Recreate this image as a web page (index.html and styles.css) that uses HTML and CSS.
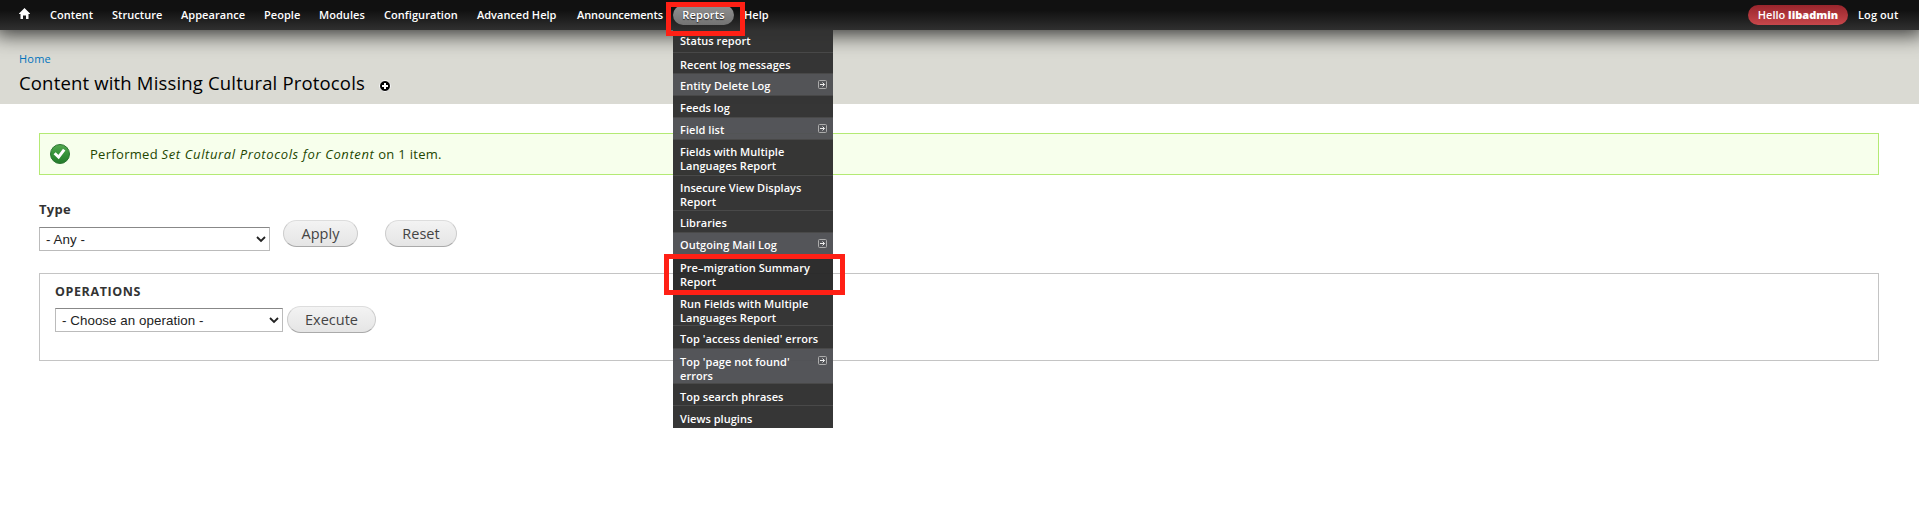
FILE: index.html
```html
<!DOCTYPE html>
<html lang="en">
<head>
<meta charset="utf-8">
<title>Content with Missing Cultural Protocols</title>
<link rel="stylesheet" href="styles.css">
</head>
<body>
<svg class="defs" width="0" height="0"><symbol id="more" viewBox="0 0 9 9"><rect x=".5" y=".5" width="8" height="8" rx="1" fill="none" stroke="#aaa"/><path d="M2 4.500h4.500M4.500 2.500l2 2-2 2" fill="none" stroke="#eee"/></symbol></svg>
<header class="admin-bar">
  <a class="home"><svg width="11" height="11" viewBox="0 0 11 11"><path d="M5.500 0 11 5.500V6H9.500v5H7V7.500H4V11H1.500V6H0V5.500z" fill="#fff"/></svg></a>
  <nav class="nav">
    <a class="w-content"><span>Content</span></a><a class="w-structure"><span>Structure</span></a><a class="w-appearance"><span>Appearance</span></a><a class="w-people"><span>People</span></a><a class="w-modules"><span>Modules</span></a><a class="w-config"><span>Configuration</span></a><a class="w-advanced"><span>Advanced Help</span></a><a class="w-announce"><span>Announcements</span></a>
    <div class="reports">
      <a class="pill"><span>Reports</span></a>
      <ul class="menu">
        <li class="h23 first"><span>Status report</span></li>
        <li class="h21"><span>Recent log messages</span></li>
        <li class="h22 sub"><span>Entity Delete Log</span><svg class="more"><use href="#more"/></svg></li>
        <li class="h22"><span>Feeds log</span></li>
        <li class="h22 sub"><span>Field list</span><svg class="more"><use href="#more"/></svg></li>
        <li class="h36"><span>Fields with Multiple<br>Languages Report</span></li>
        <li class="h35"><span>Insecure View Displays<br>Report</span></li>
        <li class="h22"><span>Libraries</span></li>
        <li class="h22 sub"><span>Outgoing Mail Log</span><svg class="more"><use href="#more"/></svg></li>
        <li class="h36 hover"><span>Pre–migration Summary<br>Report</span></li>
        <li class="h35"><span>Run Fields with Multiple<br>Languages Report</span></li>
        <li class="h23"><span>Top 'access denied' errors</span></li>
        <li class="h35 sub"><span>Top 'page not found'<br>errors</span><svg class="more"><use href="#more"/></svg></li>
        <li class="h22"><span>Top search phrases</span></li>
        <li class="h22"><span>Views plugins</span></li>
      </ul>
      <i class="mark mark-reports"></i>
      <i class="mark mark-row"></i>
    </div>
    <a class="w-help"><span>Help</span></a>
  </nav>
  <div class="account"><a class="user">Hello <b>libadmin</b></a><a class="logout"><span>Log out</span></a></div>
</header>
<section class="branding">
  <a class="crumb">Home</a>
  <div class="title-row"><h1>Content with Missing Cultural Protocols</h1>
  <svg width="12" height="12" viewBox="0 0 12 12"><circle cx="6" cy="6" r="5.500" fill="#000" stroke="#fff"/><path d="M6 3v6M3 6h6" stroke="#fff" stroke-width="2"/></svg></div>
</section>
<main>
  <div class="status">
    <svg width="20" height="20" viewBox="0 0 20 20"><defs><linearGradient id="g" x2="0" y2="1"><stop stop-color="#55a850"/><stop offset=".5" stop-color="#35933a"/><stop offset="1" stop-color="#237a2a"/></linearGradient></defs><circle cx="10" cy="10" r="9.500" fill="url(#g)" stroke="#2b7432"/><path d="M4.600 9.200 8.600 13.100 14.200 5.600" fill="none" stroke="#fff" stroke-width="3"/></svg>
    <p>Performed <em>Set Cultural Protocols for Content</em> on 1 item.</p>
  </div>
  <div class="filters">
    <div><label>Type</label><div class="select s1"><span>- Any -</span><svg width="10" height="7" viewBox="0 0 10 7"><path d="m1 1 4 4 4-4" fill="none" stroke="#222" stroke-width="1.800"/></svg></div></div>
    <button class="b-apply">Apply</button><button class="b-reset">Reset</button>
  </div>
  <fieldset>
    <h2>OPERATIONS</h2>
    <div class="ops"><div class="select s2"><span>- Choose an operation -</span><svg width="10" height="7" viewBox="0 0 10 7"><path d="m1 1 4 4 4-4" fill="none" stroke="#222" stroke-width="1.800"/></svg></div><button class="b-exec">Execute</button></div>
  </fieldset>
</main>
</body>
</html>
```
FILE: styles.css
```css
* { box-sizing: border-box; }
body { margin: 0; height: 511px; overflow: hidden; background: #fff; font-family: "Open Sans", "Noto Sans", sans-serif; color: #333; }
.defs { position: absolute; }
.admin-bar { position: relative; z-index: 2; display: flex; height: 30px; padding-left: 19px; background: linear-gradient(#111 35%, #303030); box-shadow: 0 0 20px 5px rgba(0,0,0,.75); color: #fff; font-size: 11px; font-weight: 600; white-space: nowrap; }
.home { width: 31px; padding-top: 8px; }
.home svg { display: block; }
.nav { display: flex; flex: 1; line-height: 30px; letter-spacing: .05px; }
.w-content { width: 62px; }
.w-structure { width: 69px; }
.w-appearance { width: 83px; }
.w-people { width: 55px; }
.w-modules { width: 65px; }
.w-config { width: 93px; }
.w-advanced { width: 100px; letter-spacing: 0; }
.w-announce { width: 96px; letter-spacing: -.1px; }
.reports { position: relative; width: 71px; }
.pill { display: block; width: 61px; height: 20px; margin: 5px 0 0; text-align: center; border-radius: 10px; background: linear-gradient(#909090, #737373); line-height: 20px; letter-spacing: .15px; text-shadow: 0 1px 1px #222; }
.menu { position: absolute; left: 0; top: 30px; width: 160px; margin: 0; padding: 0; list-style: none; line-height: 13.500px; letter-spacing: .04px; opacity: .97; }
.menu li { display: flex; justify-content: space-between; padding: 5px 6px 0 7px; background: #303030; border-bottom: 1px solid #444; }
.menu li.first { padding-top: 4px; }
.menu li.sub { background: #4f5054; }
.menu li.hover { background: #282828; }
.menu li.hover, .menu li.hover ~ li { padding-top: 6px; }
.menu li:last-child { border-bottom: 0; }
.h21 { height: 21px; }
.h22 { height: 22px; }
.h23 { height: 23px; }
.h35 { height: 35px; }
.h36 { height: 36px; }
.more { flex: none; width: 9px; height: 9px; margin-top: 1px; }
.mark { position: absolute; border: 5px solid #ff2015; }
.mark-reports { left: -7px; top: 2px; width: 79px; height: 34px; }
.mark-row { left: -9px; top: 254px; width: 181px; height: 41px; }
.account { display: flex; padding: 5px 20px 0 0; line-height: 20px; }
.user { width: 100px; height: 20px; margin-right: 10px; text-align: center; border-radius: 10px; background: linear-gradient(#98252c, #c8474b); }
.logout { width: 41px; letter-spacing: .1px; }
.branding { height: 104px; margin-top: -30px; padding: 50px 19px 0; background: #dadad3; }
.crumb { display: block; height: 18px; line-height: 18px; font-size: 11px; color: #0074bd; letter-spacing: .2px; }
.title-row { display: flex; align-items: center; gap: 14px; }
h1 { margin: 0; font-size: 18.500px; font-weight: 400; line-height: 30px; letter-spacing: .17px; color: #000; white-space: nowrap; }
.title-row svg { margin-top: 5px; }
main { padding: 29px 40px 0 39px; }
.status { display: flex; align-items: center; height: 42px; padding-left: 10px; gap: 20px; border: 1px solid #b4ea74; background: #f7ffec; color: #234600; font-size: 13px; letter-spacing: .3px; }
.status p { margin: 0; }
.status em { letter-spacing: .62px; }
.filters { display: flex; height: 98px; padding-top: 25px; }
label { display: block; height: 27px; font-size: 13px; font-weight: 700; line-height: 18px; letter-spacing: .3px; }
.select { display: flex; align-items: center; justify-content: space-between; height: 24px; padding: 0 3px 0 6px; border: 1px solid #bbb; border-top-color: #888; background: #fff; font: 13.333px "Liberation Sans", sans-serif; color: #222; }
.select span { padding-top: 1px; letter-spacing: .06px; }
.s1 { width: 231px; }
.s2 { width: 228px; }
button { height: 27px; padding: 0; border: 1px solid #ccc; border-top-color: #ddd; border-bottom-color: #aaa; border-radius: 14px; background: linear-gradient(#f3f3f3, #e5e5e5); font: 14.500px "Open Sans", sans-serif; color: #444; }
.b-apply { width: 75px; margin: 20px 27px 0 13px; }
.b-reset { width: 72px; margin-top: 20px; }
fieldset { height: 88px; margin: 0; padding: 8px 15px; border: 1px solid #c4c4c4; }
h2 { height: 24px; margin: 0; font-size: 12.500px; font-weight: 700; line-height: 20px; letter-spacing: .6px; }
.ops { display: flex; gap: 4px; }
.ops .select { margin-top: 2px; }
.b-exec { width: 89px; }
```
